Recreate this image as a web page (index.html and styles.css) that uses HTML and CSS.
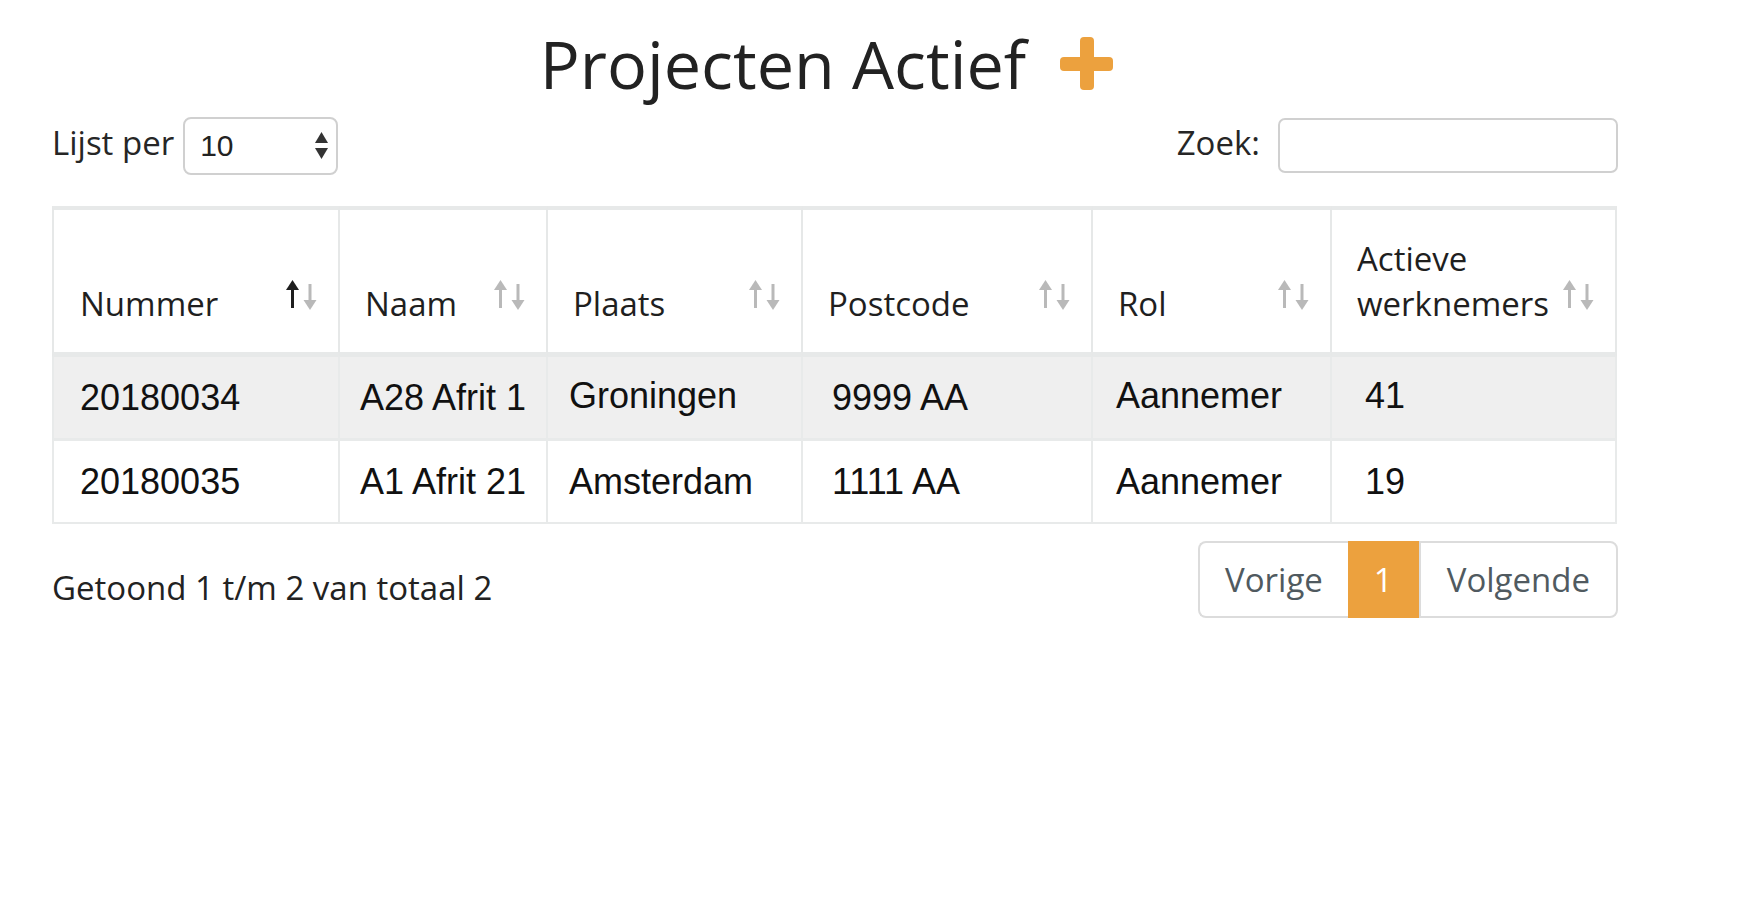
FILE: index.html
```html
<!DOCTYPE html>
<html lang="nl">
<head>
<meta charset="utf-8">
<title>Projecten Actief</title>
<link rel="stylesheet" href="styles.css">
</head>
<body>
<div class="page">
  <h1 class="title">
    <span class="title-text">Projecten Actief</span>
    <svg class="plus" width="53" height="53" viewBox="0 0 53 53" aria-hidden="true">
      <rect x="20" y="0" width="14" height="53" rx="4" fill="#eca13e"/>
      <rect x="0" y="20" width="53" height="14" rx="4" fill="#eca13e"/>
    </svg>
  </h1>

  <div class="controls">
    <div class="length">
      <span class="label">Lijst per</span>
      <div class="select">
        <span class="select-value">10</span>
        <svg class="select-arrows" width="13" height="27" viewBox="0 0 13 27" aria-hidden="true">
          <polygon points="0,11 6.5,0 13,11" fill="#333"/>
          <polygon points="0,16 6.5,27 13,16" fill="#333"/>
        </svg>
      </div>
    </div>
    <div class="search">
      <span class="label">Zoek:</span>
      <input class="search-input" type="text">
    </div>
  </div>

  <table class="data">
    <thead>
      <tr>
        <th class="col-nummer">Nummer
          <svg class="sort" width="33" height="31" viewBox="0 0 33 31" aria-hidden="true">
            <polygon points="0,10 6.5,0 13,10" fill="#1e1e1e"/><rect x="5" y="8" width="3" height="20" fill="#1e1e1e"/>
            <rect x="22.5" y="4" width="3" height="19" fill="#b9b9b9"/><polygon points="17.5,20 24,30 30.5,20" fill="#b9b9b9"/>
          </svg>
        </th>
        <th class="col-naam">Naam
          <svg class="sort" width="33" height="31" viewBox="0 0 33 31" aria-hidden="true">
            <polygon points="0,10 6.5,0 13,10" fill="#b9b9b9"/><rect x="5" y="8" width="3" height="20" fill="#b9b9b9"/>
            <rect x="22.5" y="4" width="3" height="19" fill="#b9b9b9"/><polygon points="17.5,20 24,30 30.5,20" fill="#b9b9b9"/>
          </svg>
        </th>
        <th class="col-plaats">Plaats
          <svg class="sort" width="33" height="31" viewBox="0 0 33 31" aria-hidden="true">
            <polygon points="0,10 6.5,0 13,10" fill="#b9b9b9"/><rect x="5" y="8" width="3" height="20" fill="#b9b9b9"/>
            <rect x="22.5" y="4" width="3" height="19" fill="#b9b9b9"/><polygon points="17.5,20 24,30 30.5,20" fill="#b9b9b9"/>
          </svg>
        </th>
        <th class="col-postcode">Postcode
          <svg class="sort" width="33" height="31" viewBox="0 0 33 31" aria-hidden="true">
            <polygon points="0,10 6.5,0 13,10" fill="#b9b9b9"/><rect x="5" y="8" width="3" height="20" fill="#b9b9b9"/>
            <rect x="22.5" y="4" width="3" height="19" fill="#b9b9b9"/><polygon points="17.5,20 24,30 30.5,20" fill="#b9b9b9"/>
          </svg>
        </th>
        <th class="col-rol">Rol
          <svg class="sort" width="33" height="31" viewBox="0 0 33 31" aria-hidden="true">
            <polygon points="0,10 6.5,0 13,10" fill="#b9b9b9"/><rect x="5" y="8" width="3" height="20" fill="#b9b9b9"/>
            <rect x="22.5" y="4" width="3" height="19" fill="#b9b9b9"/><polygon points="17.5,20 24,30 30.5,20" fill="#b9b9b9"/>
          </svg>
        </th>
        <th class="col-actief">Actieve werknemers
          <svg class="sort" width="33" height="31" viewBox="0 0 33 31" aria-hidden="true">
            <polygon points="0,10 6.5,0 13,10" fill="#b9b9b9"/><rect x="5" y="8" width="3" height="20" fill="#b9b9b9"/>
            <rect x="22.5" y="4" width="3" height="19" fill="#b9b9b9"/><polygon points="17.5,20 24,30 30.5,20" fill="#b9b9b9"/>
          </svg>
        </th>
      </tr>
    </thead>
    <tbody>
      <tr class="odd">
        <td>20180034</td>
        <td>A28 Afrit 1</td>
        <td class="up">Groningen</td>
        <td>9999 AA</td>
        <td class="up">Aannemer</td>
        <td class="up">41</td>
      </tr>
      <tr class="even">
        <td>20180035</td>
        <td>A1 Afrit 21</td>
        <td>Amsterdam</td>
        <td>1111 AA</td>
        <td>Aannemer</td>
        <td>19</td>
      </tr>
    </tbody>
  </table>

  <div class="footer">
    <div class="info">Getoond 1 t/m 2 van totaal 2</div>
    <ul class="pagination">
      <li class="page-prev">Vorige</li>
      <li class="page-active">1</li>
      <li class="page-next">Volgende</li>
    </ul>
  </div>
</div>
</body>
</html>
```

FILE: styles.css
```css
* {
  box-sizing: border-box;
}

html,
body {
  margin: 0;
  padding: 0;
  background: #ffffff;
}

body {
  font-family: "Open Sans", "Liberation Sans", sans-serif;
  font-size: 33px;
  line-height: 45px;
  color: #262626;
}

.page {
  width: 1618px;
  padding-left: 52px;
}

/* Title */
.title {
  margin: 27px 0 0;
  padding-right: 17px;
  display: flex;
  justify-content: center;
  align-items: center;
  font-size: 66.5px;
  font-weight: 400;
  line-height: 1.11;
  color: #222222;
}

.plus {
  display: block;
  margin-left: 34px;
}

/* Controls row */
.controls {
  margin-top: 16px;
  height: 58px;
  display: flex;
  justify-content: space-between;
  align-items: center;
}

.length,
.search {
  display: flex;
  align-items: center;
}

.label {
  padding-bottom: 7px;
  color: #262626;
}

.select {
  width: 155px;
  height: 58px;
  margin-left: 9px;
  padding: 0 8px 0 15px;
  border: 2px solid #d0d0d0;
  border-radius: 8px;
  display: flex;
  align-items: center;
  justify-content: space-between;
  font-family: "Liberation Sans", Arial, sans-serif;
  font-size: 30px;
  line-height: 34px;
  color: #222222;
}

.select-arrows {
  display: block;
}

.search-input {
  width: 340px;
  height: 55px;
  margin: 0 0 0 18px;
  border: 2px solid #d0d0d0;
  border-radius: 7px;
  background: #ffffff;
  outline: none;
}

/* Table */
.data {
  margin-top: 31px;
  width: 1565px;
  border-collapse: separate;
  border-spacing: 0;
  table-layout: fixed;
}

.data th {
  position: relative;
  padding: 26px 55px 26px 25px;
  border-top: 4px solid #e7e9e9;
  border-bottom: 5px solid #e7e9e9;
  border-right: 2px solid #e6e8e8;
  font-family: "Open Sans", sans-serif;
  font-weight: 400;
  font-size: 33px;
  line-height: 45px;
  color: #1f1f1f;
  text-align: left;
  vertical-align: bottom;
}

.data th:first-child {
  border-left: 2px solid #e6e8e8;
  padding-left: 26px;
}

.col-nummer { width: 288px; }
.col-naam { width: 208px; }
.col-plaats { width: 255px; }
.col-postcode { width: 290px; }
.col-rol { width: 239px; }
.col-actief { width: 285px; }

.sort {
  position: absolute;
  right: 19px;
  bottom: 41px;
  display: block;
}

.data td {
  padding: 18px 6px 18px 24px;
  border-right: 2px solid #e8eaea;
  border-bottom: 3px solid #e8eaea;
  font-family: "Liberation Sans", Arial, sans-serif;
  font-size: 36px;
  line-height: 45px;
  color: #111111;
  white-space: nowrap;
  vertical-align: top;
}

.data td:first-child {
  border-left: 2px solid #e8eaea;
  padding-left: 26px;
}

.data td:nth-child(2) { padding-left: 20px; }
.data td:nth-child(3) { padding-left: 21px; }
.data td:nth-child(4) { padding-left: 29px; }
.data td:nth-child(5) { padding-left: 23px; }
.data td:nth-child(6) { padding-left: 33px; }

.data td.up {
  padding-top: 16px;
  padding-bottom: 20px;
}

.data tr.odd td {
  background: #efefef;
}

.data tr.even td {
  border-bottom-width: 2px;
}

/* Footer */
.footer {
  margin-top: 17px;
  display: flex;
  justify-content: space-between;
  align-items: flex-start;
}

.info {
  margin-top: 24px;
  color: #222222;
}

.pagination {
  margin: 0;
  padding: 0;
  list-style: none;
  display: flex;
}

.pagination li {
  padding: 14px 25px;
  border-top: 2px solid #dcdcdc;
  border-bottom: 2px solid #dcdcdc;
  line-height: 45px;
  color: #505a60;
}

.page-prev {
  border-left: 2px solid #dcdcdc;
  border-radius: 8px 0 0 8px;
}

.pagination .page-active {
  padding-left: 26px;
  padding-right: 26px;
  background: #eca13e;
  border-color: #eca13e;
  color: #ffffff;
}

.pagination .page-next {
  padding-left: 26px;
  padding-right: 26px;
  border-left: 2px solid #dcdcdc;
  border-right: 2px solid #dcdcdc;
  border-radius: 0 8px 8px 0;
}
```
